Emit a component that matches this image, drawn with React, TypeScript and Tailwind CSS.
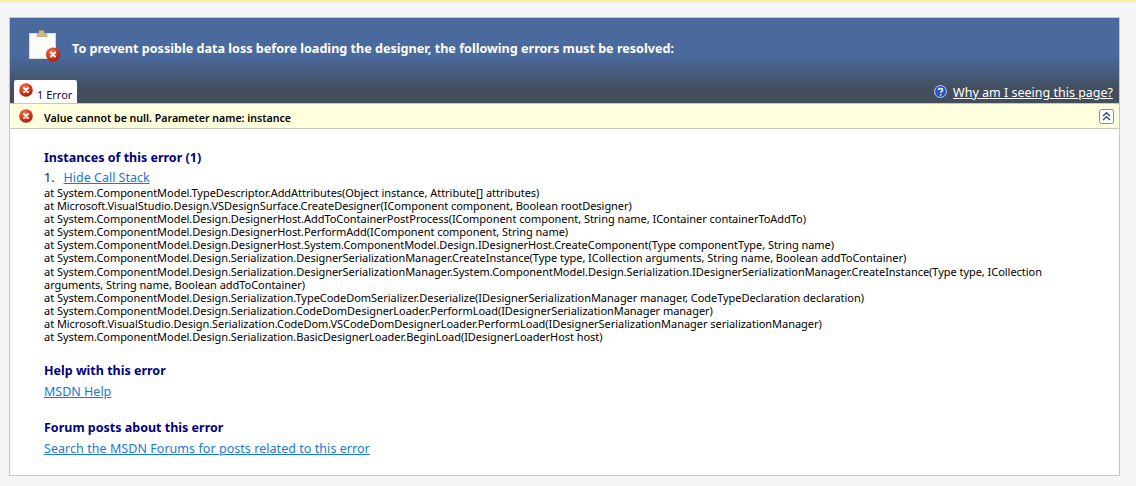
const font = { fontFamily: '"Noto Sans", "DejaVu Sans", sans-serif' };

function ErrorIcon({ size = 14 }: { size?: number }) {
  return (
    <svg width={size} height={size} viewBox="0 0 14 14" className="block shrink-0">
      <defs>
        <radialGradient id="redG" cx="40%" cy="30%" r="75%">
          <stop offset="0%" stopColor="#f0765a" />
          <stop offset="55%" stopColor="#d8391c" />
          <stop offset="100%" stopColor="#9c1c0c" />
        </radialGradient>
      </defs>
      <circle cx="7" cy="7" r="6.8" fill="url(#redG)" />
      <path d="M5 5 9 9M9 5 5 9" stroke="#fff" strokeWidth="2" strokeLinecap="round" />
    </svg>
  );
}

function ClipboardIcon() {
  return (
    <svg width="34" height="32" viewBox="0 0 34 32" className="block">
      <rect x="0.5" y="3.5" width="26" height="25" fill="#fbfbf8" stroke="#d8d8d0" />
      <path d="M8 4.5 10 2.5V0.5h5v2l3 2V6.5H8Z" fill="#cdbb85" stroke="#a8975f" strokeWidth="0.6" />
      <circle cx="24" cy="24.5" r="7" fill="url(#redG)" />
      <path d="M22 22.5 26 26.5M26 22.5 22 26.5" stroke="#fff" strokeWidth="2" strokeLinecap="round" />
    </svg>
  );
}

function HelpIcon() {
  return (
    <svg width="13" height="13" viewBox="0 0 13 13" className="mb-[3px] block shrink-0">
      <circle cx="6.5" cy="6.5" r="6" fill="#2a55c8" stroke="#b9cff5" strokeWidth="1" />
      <path d="M4.5 5C4.5 2.9 8.6 2.9 8.6 5 8.6 6.4 6.6 6.3 6.6 7.8" fill="none" stroke="#fff" strokeWidth="1.4" />
      <rect x="5.9" y="9" width="1.4" height="1.5" fill="#fff" />
    </svg>
  );
}

function CollapseIcon() {
  return (
    <svg width="15" height="15" viewBox="0 0 15 15" className="block">
      <rect x="0.5" y="0.5" width="14" height="14" rx="2" fill="#fff" stroke="#6f8fc0" />
      <path d="M4 7 7.5 3.8 11 7M4 11 7.5 7.8 11 11" fill="none" stroke="#2b4a85" strokeWidth="1.4" />
    </svg>
  );
}

const stack = [
  "at System.ComponentModel.TypeDescriptor.AddAttributes(Object instance, Attribute[] attributes)",
  "at Microsoft.VisualStudio.Design.VSDesignSurface.CreateDesigner(IComponent component, Boolean rootDesigner)",
  "at System.ComponentModel.Design.DesignerHost.AddToContainerPostProcess(IComponent component, String name, IContainer containerToAddTo)",
  "at System.ComponentModel.Design.DesignerHost.PerformAdd(IComponent component, String name)",
  "at System.ComponentModel.Design.DesignerHost.System.ComponentModel.Design.IDesignerHost.CreateComponent(Type componentType, String name)",
  "at System.ComponentModel.Design.Serialization.DesignerSerializationManager.CreateInstance(Type type, ICollection arguments, String name, Boolean addToContainer)",
  "at System.ComponentModel.Design.Serialization.DesignerSerializationManager.System.ComponentModel.Design.Serialization.IDesignerSerializationManager.CreateInstance(Type type, ICollection arguments, String name, Boolean addToContainer)",
  "at System.ComponentModel.Design.Serialization.TypeCodeDomSerializer.Deserialize(IDesignerSerializationManager manager, CodeTypeDeclaration declaration)",
  "at System.ComponentModel.Design.Serialization.CodeDomDesignerLoader.PerformLoad(IDesignerSerializationManager manager)",
  "at Microsoft.VisualStudio.Design.Serialization.CodeDom.VSCodeDomDesignerLoader.PerformLoad(IDesignerSerializationManager serializationManager)",
  "at System.ComponentModel.Design.Serialization.BasicDesignerLoader.BeginLoad(IDesignerLoaderHost host)",
];

export default function App() {
  return (
    <div className="h-[486px] w-[1136px] overflow-hidden bg-[#f5f5f5]" style={font}>
      <div className="h-[2px] bg-[#ffeb9c]" />
      <div className="mx-[9px] mt-[15px] h-[459px] w-[1111px] border border-[#c9c7bd] bg-white">
        <div className="flex h-[85px] flex-col justify-between bg-[linear-gradient(to_bottom,#4a6a9e_0px,#4a6a9e_37px,#434d5c_72px,#434d5c_85px)]">
          <div className="flex items-start pl-[19px] pt-[12px]">
            <ClipboardIcon />
            <div className="ml-[9px] pt-[10px] text-[12.6px] leading-[18px] font-bold text-white">
              To prevent possible data loss before loading the designer, the following errors must be resolved:
            </div>
          </div>
          <div className="flex items-end justify-between pl-[4px] pr-[6px]">
            <div className="relative flex h-[23px] w-[63px] items-center rounded-t-[2px] bg-white pl-[23px] pt-[7px] text-[11px] text-[#1a0a3c]">
              1 Error
              <span className="absolute left-[5px] top-[3px]"><ErrorIcon /></span>
            </div>
            <div className="flex items-center gap-[6px] pb-[1px]">
              <HelpIcon />
              <a className="text-[12.5px] leading-[18px] text-white underline">Why am I seeing this page?</a>
            </div>
          </div>
        </div>
        <div className="flex h-[26px] items-center justify-between border-y border-[#c9c7bd] bg-[#fffedd] pl-[9px] pr-[5px]">
          <div className="flex items-center">
            <ErrorIcon />
            <span className="ml-[11px] pt-[6px] text-[10.6px] font-semibold text-black">Value cannot be null. Parameter name: instance</span>
          </div>
          <CollapseIcon />
        </div>
        <div className="px-[34px] pr-[70px] pt-[20px] text-black">
          <h2 className="text-[12.5px] leading-[18px] font-bold text-[#000080]">Instances of this error (1)</h2>
          <div className="mt-[3px] text-[12.5px] leading-[16px] text-[#222]">
            1.<a className="ml-[9px] text-[#1a78d8] underline">Hide Call Stack</a>
          </div>
          <div className="text-[11px] leading-[13.1px] tracking-[-0.04px]">
            {stack.map((s) => <div key={s}>{s}</div>)}
          </div>
          <h2 className="mt-[19px] text-[12.5px] leading-[18px] font-bold text-[#000080]">Help with this error</h2>
          <a className="mt-[3px] block text-[12.5px] leading-[18px] text-[#1a78d8] underline">MSDN Help</a>
          <h2 className="mt-[18px] text-[12.5px] leading-[18px] font-bold text-[#000080]">Forum posts about this error</h2>
          <a className="mt-[3px] block text-[12.5px] leading-[18px] tracking-[0.05px] text-[#1a78d8] underline">Search the MSDN Forums for posts related to this error</a>
        </div>
      </div>
    </div>
  );
}
